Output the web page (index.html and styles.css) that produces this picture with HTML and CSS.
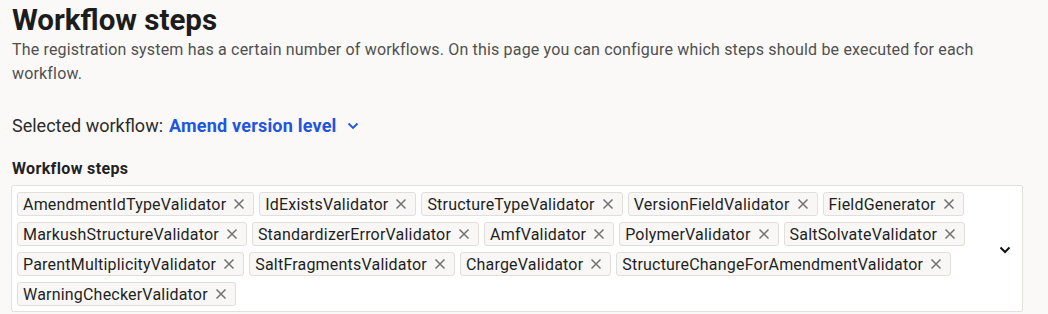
FILE: index.html
```html
<!DOCTYPE html>
<html lang="en">
<head>
<meta charset="utf-8">
<title>Workflow steps</title>
<link rel="stylesheet" href="styles.css">
</head>
<body>
<main class="page">
  <h1 class="title">Workflow steps</h1>
  <p class="intro">The registration system has a certain number of workflows. On this page you can configure which steps should be executed for each workflow.</p>
  <div class="selector">
    <span class="selector-label">Selected workflow:</span>
    <button class="selector-value">Amend version level
      <svg class="chev-small" viewBox="0 0 12 8" width="12" height="8"><path d="M1.5 1.5 L6 6 L10.5 1.5" fill="none" stroke="currentColor" stroke-width="1.8"/></svg>
    </button>
  </div>
  <div class="field-label">Workflow steps</div>
  <div class="multiselect">
    <div class="tags">
      <span class="tag">AmendmentIdTypeValidator<svg class="x" viewBox="0 0 12 12" width="12" height="12"><path d="M1.5 1.5 L10.5 10.5 M10.5 1.5 L1.5 10.5"/></svg></span>
      <span class="tag">IdExistsValidator<svg class="x" viewBox="0 0 12 12" width="12" height="12"><path d="M1.5 1.5 L10.5 10.5 M10.5 1.5 L1.5 10.5"/></svg></span>
      <span class="tag">StructureTypeValidator<svg class="x" viewBox="0 0 12 12" width="12" height="12"><path d="M1.5 1.5 L10.5 10.5 M10.5 1.5 L1.5 10.5"/></svg></span>
      <span class="tag">VersionFieldValidator<svg class="x" viewBox="0 0 12 12" width="12" height="12"><path d="M1.5 1.5 L10.5 10.5 M10.5 1.5 L1.5 10.5"/></svg></span>
      <span class="tag">FieldGenerator<svg class="x" viewBox="0 0 12 12" width="12" height="12"><path d="M1.5 1.5 L10.5 10.5 M10.5 1.5 L1.5 10.5"/></svg></span>
      <span class="tag">MarkushStructureValidator<svg class="x" viewBox="0 0 12 12" width="12" height="12"><path d="M1.5 1.5 L10.5 10.5 M10.5 1.5 L1.5 10.5"/></svg></span>
      <span class="tag">StandardizerErrorValidator<svg class="x" viewBox="0 0 12 12" width="12" height="12"><path d="M1.5 1.5 L10.5 10.5 M10.5 1.5 L1.5 10.5"/></svg></span>
      <span class="tag">AmfValidator<svg class="x" viewBox="0 0 12 12" width="12" height="12"><path d="M1.5 1.5 L10.5 10.5 M10.5 1.5 L1.5 10.5"/></svg></span>
      <span class="tag">PolymerValidator<svg class="x" viewBox="0 0 12 12" width="12" height="12"><path d="M1.5 1.5 L10.5 10.5 M10.5 1.5 L1.5 10.5"/></svg></span>
      <span class="tag">SaltSolvateValidator<svg class="x" viewBox="0 0 12 12" width="12" height="12"><path d="M1.5 1.5 L10.5 10.5 M10.5 1.5 L1.5 10.5"/></svg></span>
      <span class="tag">ParentMultiplicityValidator<svg class="x" viewBox="0 0 12 12" width="12" height="12"><path d="M1.5 1.5 L10.5 10.5 M10.5 1.5 L1.5 10.5"/></svg></span>
      <span class="tag">SaltFragmentsValidator<svg class="x" viewBox="0 0 12 12" width="12" height="12"><path d="M1.5 1.5 L10.5 10.5 M10.5 1.5 L1.5 10.5"/></svg></span>
      <span class="tag">ChargeValidator<svg class="x" viewBox="0 0 12 12" width="12" height="12"><path d="M1.5 1.5 L10.5 10.5 M10.5 1.5 L1.5 10.5"/></svg></span>
      <span class="tag">StructureChangeForAmendmentValidator<svg class="x" viewBox="0 0 12 12" width="12" height="12"><path d="M1.5 1.5 L10.5 10.5 M10.5 1.5 L1.5 10.5"/></svg></span>
      <span class="tag">WarningCheckerValidator<svg class="x" viewBox="0 0 12 12" width="12" height="12"><path d="M1.5 1.5 L10.5 10.5 M10.5 1.5 L1.5 10.5"/></svg></span>
    </div>
    <div class="toggle">
      <svg viewBox="0 0 12 8" width="12" height="8"><path d="M1.5 1.5 L6 6 L10.5 1.5" fill="none" stroke="#111" stroke-width="2"/></svg>
    </div>
  </div>
</main>
</body>
</html>
```

FILE: styles.css
```css
html, body {
  margin: 0;
  padding: 0;
  background: #faf9f8;
}
body {
  font-family: Roboto, "Liberation Sans", sans-serif;
  color: #1f1f1f;
}
.page {
  padding: 0 25px 0 11px;
}
.title {
  margin: 0;
  padding: 2px 0 0 1px;
  font-size: 29.5px;
  line-height: 36px;
  font-weight: 700;
  color: #1c1c1c;
}
.intro {
  margin: 0 0 0 1px;
  font-size: 16px;
  line-height: 24px;
  letter-spacing: 0.17px;
  color: #505050;
  max-width: 990px;
}
.selector {
  margin-top: 28px;
  display: flex;
  align-items: center;
  padding-left: 1px;
  font-size: 18px;
  line-height: 24px;
}
.selector-label {
  color: #2b2b2b;
}
.selector-value {
  margin-left: 6px;
  padding: 0;
  border: 0;
  background: none;
  font: inherit;
  font-weight: 700;
  letter-spacing: 0.2px;
  color: #1f55e0;
  display: flex;
  align-items: center;
  gap: 10px;
  cursor: pointer;
}
.field-label {
  margin-top: 21px;
  padding-left: 1px;
  font-size: 16px;
  line-height: 20px;
  font-weight: 700;
  letter-spacing: 0.35px;
  color: #222;
}
.multiselect {
  margin-top: 6px;
  display: flex;
  align-items: center;
  background: #fff;
  border: 1px solid #e4e0dc;
  border-radius: 2px;
  min-height: 127px;
  box-sizing: border-box;
  padding: 6px 0 4px 5px;
}
.tags {
  flex: 1;
  display: flex;
  flex-wrap: wrap;
  align-content: flex-start;
  align-self: flex-start;
  gap: 6px 5px;
}
.tag {
  display: inline-flex;
  align-items: center;
  height: 24px;
  box-sizing: border-box;
  padding: 0 8px 0 5px;
  background: #f8f7f6;
  border: 1px solid #e2dfdb;
  border-radius: 3px;
  font-size: 16px;
  letter-spacing: 0.2px;
  color: #1f1f1f;
}
.x {
  margin-left: 7px;
  fill: none;
  stroke: #727272;
  stroke-width: 1.5;
}
.toggle {
  width: 34px;
  display: flex;
  justify-content: center;
}
```
